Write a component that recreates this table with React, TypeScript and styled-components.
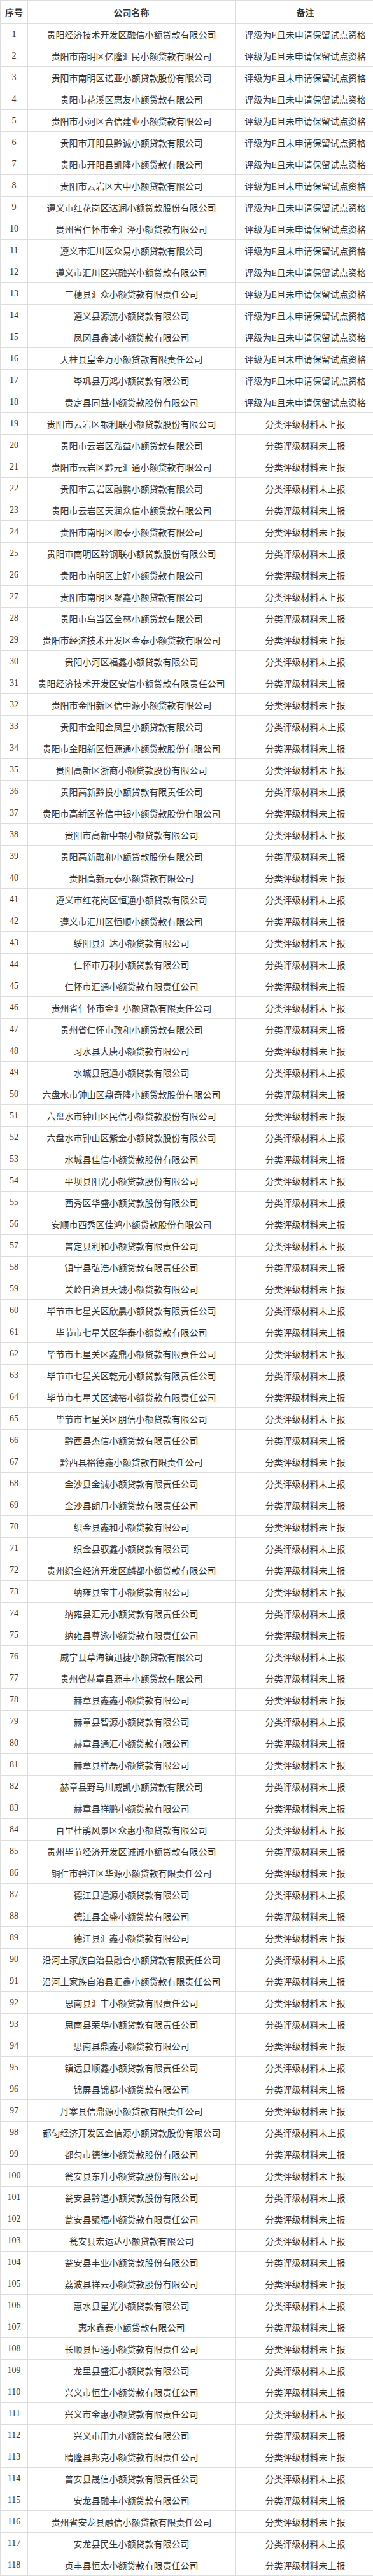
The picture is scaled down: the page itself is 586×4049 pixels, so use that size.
import React from 'react';
import styled, { createGlobalStyle } from 'styled-components';

const GlobalStyle = createGlobalStyle`
  html, body {
    margin: 0;
    padding: 0;
    background: #fff;
  }
`;

const Table = styled.table`
  width: 586px;
  border-collapse: collapse;
  table-layout: fixed;
  font-family: 'Liberation Serif', 'Noto Sans CJK SC', serif;
  font-size: 14px;
  color: #333;
`;

const HeadCell = styled.th<{ w: number }>`
  width: ${(p) => p.w}px;
  height: 35px;
  padding: 0;
  border: 1px solid #ddd;
  font-family: 'Noto Sans CJK SC', sans-serif;
  font-weight: bold;
  font-size: 14px;
  color: #333;
  text-align: center;
`;

const Cell = styled.td`
  height: 33px;
  padding: 0;
  border: 1px solid #ddd;
  text-align: center;
  white-space: nowrap;
  overflow: hidden;
`;

const REJECT = '评级为E且未申请保留试点资格';
const MISSING = '分类评级材料未上报';

const companies = [
  '贵阳经济技术开发区融信小额贷款有限公司',
  '贵阳市南明区亿隆汇民小额贷款有限公司',
  '贵阳市南明区诺亚小额贷款股份有限公司',
  '贵阳市花溪区惠友小额贷款有限公司',
  '贵阳市小河区合信建业小额贷款有限公司',
  '贵阳市开阳县黔诚小额贷款有限公司',
  '贵阳市开阳县凯隆小额贷款有限公司',
  '贵阳市云岩区大中小额贷款有限公司',
  '遵义市红花岗区达润小额贷款股份有限公司',
  '贵州省仁怀市金汇泽小额贷款有限公司',
  '遵义市汇川区众易小额贷款有限公司',
  '遵义市汇川区兴融兴小额贷款有限公司',
  '三穗县汇众小额贷款有限责任公司',
  '遵义县源流小额贷款有限公司',
  '凤冈县鑫诚小额贷款有限公司',
  '天柱县皇金万小额贷款有限责任公司',
  '岑巩县万鸿小额贷款有限公司',
  '贵定县同益小额贷款股份有限公司',
  '贵阳市云岩区银利联小额贷款股份有限公司',
  '贵阳市云岩区泓益小额贷款有限公司',
  '贵阳市云岩区黔元汇通小额贷款有限公司',
  '贵阳市云岩区融鹏小额贷款有限公司',
  '贵阳市云岩区天润众信小额贷款有限公司',
  '贵阳市南明区顺泰小额贷款有限公司',
  '贵阳市南明区黔钢联小额贷款股份有限公司',
  '贵阳市南明区上好小额贷款有限公司',
  '贵阳市南明区聚鑫小额贷款有限公司',
  '贵阳市乌当区全林小额贷款有限公司',
  '贵阳市经济技术开发区金泰小额贷款有限公司',
  '贵阳小河区福鑫小额贷款有限公司',
  '贵阳经济技术开发区安信小额贷款有限责任公司',
  '贵阳市金阳新区信中源小额贷款有限公司',
  '贵阳市金阳金凤皇小额贷款有限公司',
  '贵阳市金阳新区恒源通小额贷款股份有限公司',
  '贵阳高新区浙商小额贷款股份有限公司',
  '贵阳高新黔投小额贷款有限责任公司',
  '贵阳市高新区乾信中银小额贷款股份有限公司',
  '贵阳市高新中银小额贷款有限公司',
  '贵阳高新融和小额贷款股份有限公司',
  '贵阳高新元泰小额贷款有限公司',
  '遵义市红花岗区恒通小额贷款有限公司',
  '遵义市汇川区恒顺小额贷款有限公司',
  '绥阳县汇达小额贷款有限公司',
  '仁怀市万利小额贷款有限公司',
  '仁怀市汇通小额贷款有限责任公司',
  '贵州省仁怀市金汇小额贷款有限责任公司',
  '贵州省仁怀市致和小额贷款有限公司',
  '习水县大唐小额贷款有限公司',
  '水城县冠通小额贷款有限公司',
  '六盘水市钟山区鼎奇隆小额贷款股份有限公司',
  '六盘水市钟山区民信小额贷款股份有限公司',
  '六盘水市钟山区紫金小额贷款股份有限公司',
  '水城县佳信小额贷款股份有限公司',
  '平坝县阳光小额贷款股份有限公司',
  '西秀区华盛小额贷款股份有限公司',
  '安顺市西秀区佳鸿小额贷款股份有限公司',
  '普定县利和小额贷款有限责任公司',
  '镇宁县弘浩小额贷款有限责任公司',
  '关岭自治县天诚小额贷款有限公司',
  '毕节市七星关区欣晨小额贷款有限责任公司',
  '毕节市七星关区华泰小额贷款有限公司',
  '毕节市七星关区鑫鼎小额贷款有限责任公司',
  '毕节市七星关区乾元小额贷款有限责任公司',
  '毕节市七星关区诚裕小额贷款有限责任公司',
  '毕节市七星关区朋信小额贷款有限公司',
  '黔西县杰信小额贷款有限责任公司',
  '黔西县裕德鑫小额贷款有限责任公司',
  '金沙县金诚小额贷款有限责任公司',
  '金沙县朗月小额贷款有限责任公司',
  '织金县鑫和小额贷款有限公司',
  '织金县驭鑫小额贷款有限公司',
  '贵州织金经济开发区麟都小额贷款有限公司',
  '纳雍县宝丰小额贷款有限公司',
  '纳雍县汇元小额贷款有限责任公司',
  '纳雍县尊泳小额贷款有限责任公司',
  '威宁县草海镇迅捷小额贷款有限公司',
  '贵州省赫章县源丰小额贷款有限公司',
  '赫章县鑫鑫小额贷款有限公司',
  '赫章县智源小额贷款有限公司',
  '赫章县通汇小额贷款有限公司',
  '赫章县祥磊小额贷款有限公司',
  '赫章县野马川威凯小额贷款有限公司',
  '赫章县祥鹏小额贷款有限公司',
  '百里杜鹃风景区众惠小额贷款有限公司',
  '贵州毕节经济开发区诚诚小额贷款有限公司',
  '铜仁市碧江区华源小额贷款有限责任公司',
  '德江县通源小额贷款有限公司',
  '德江县金盛小额贷款有限公司',
  '德江县汇鑫小额贷款有限公司',
  '沿河土家族自治县融合小额贷款有限责任公司',
  '沿河土家族自治县汇鑫小额贷款有限责任公司',
  '思南县汇丰小额贷款有限责任公司',
  '思南县荣华小额贷款有限责任公司',
  '思南县鼎鑫小额贷款有限公司',
  '镇远县顺鑫小额贷款有限责任公司',
  '锦屏县锦都小额贷款有限公司',
  '丹寨县信鼎源小额贷款有限责任公司',
  '都匀经济开发区金信源小额贷款股份有限公司',
  '都匀市德律小额贷款股份有限公司',
  '瓮安县东升小额贷款股份有限公司',
  '瓮安县黔道小额贷款股份有限公司',
  '瓮安县聚福小额贷款有限责任公司',
  '瓮安县宏运达小额贷款有限公司',
  '瓮安县丰业小额贷款股份有限公司',
  '荔波县祥云小额贷款股份有限公司',
  '惠水县星光小额贷款有限公司',
  '惠水鑫泰小额贷款有限公司',
  '长顺县恒通小额贷款有限责任公司',
  '龙里县盛汇小额贷款有限公司',
  '兴义市恒生小额贷款有限责任公司',
  '兴义市金惠小额贷款有限责任公司',
  '兴义市用九小额贷款有限公司',
  '晴隆县邦克小额贷款有限责任公司',
  '普安县晟信小额贷款有限责任公司',
  '安龙县融丰小额贷款有限公司',
  '贵州省安龙县融信小额贷款有限责任公司',
  '安龙县民生小额贷款有限公司',
  '贞丰县恒太小额贷款有限责任公司',
];

export default function App() {
  return (
    <>
      <GlobalStyle />
      <Table>
        <thead>
          <tr>
            <HeadCell w={42}>序号</HeadCell>
            <HeadCell w={325}>公司名称</HeadCell>
            <HeadCell w={219}>备注</HeadCell>
          </tr>
        </thead>
        <tbody>
          {companies.map((name, i) => (
            <tr key={i}>
              <Cell>{i + 1}</Cell>
              <Cell>{name}</Cell>
              <Cell>{i < 18 ? REJECT : MISSING}</Cell>
            </tr>
          ))}
        </tbody>
      </Table>
    </>
  );
}
